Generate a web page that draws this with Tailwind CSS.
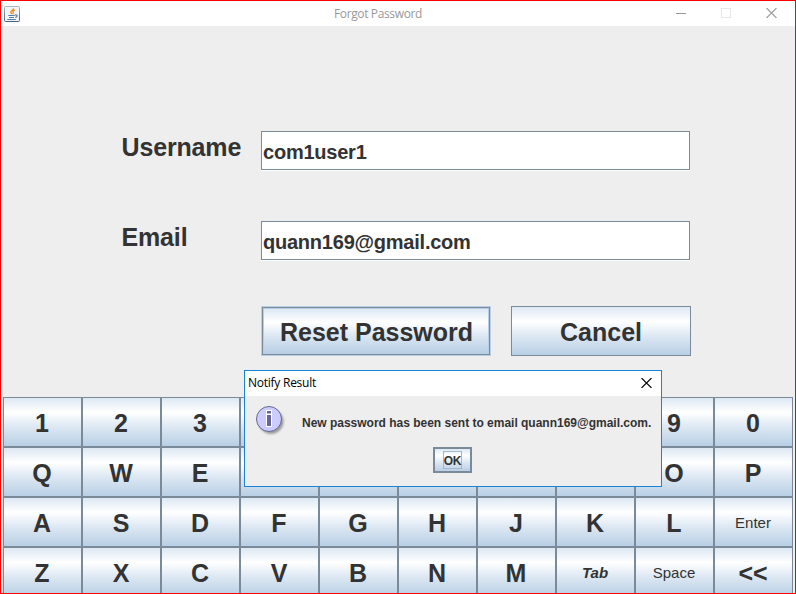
<!DOCTYPE html>
<html lang="en">
<head>
<meta charset="utf-8">
<title>Forgot Password</title>
<script src="https://cdn.jsdelivr.net/npm/@tailwindcss/browser@4"></script>
</head>
<body class="w-[796px] h-[594px] overflow-hidden">
<div class="w-[796px] h-[594px] p-px bg-[#ff0000]">
<div class="relative flex flex-col w-[794px] h-[592px] overflow-hidden bg-[#eeeeee] text-[#333333] font-['Liberation_Sans',Arial,sans-serif]">
  <header class="flex items-center h-[25px] shrink-0 bg-white pl-[3px]">
    <svg class="size-4 shrink-0" viewBox="0 0 16 16">
      <defs><linearGradient id="jb" x1="0" y1="0" x2="0" y2="1"><stop offset="0" stop-color="#a9b7c4"/><stop offset="1" stop-color="#41617c"/></linearGradient></defs>
      <rect x=".5" y=".5" width="15" height="15" rx="1" fill="#f2f4f5" stroke="url(#jb)"/>
      <path d="M9.800 2.500C9.500 4 6.300 4.800 6.700 6.200c.2.8.9 1.200.9 2M10.800 4.200C8.800 5 8.500 5.800 9.100 6.500c.3.5 0 1-.4 1.500" fill="none" stroke="#ee8a22" stroke-width="1.300"/>
      <path d="M4.300 9.500h6.500M5 11.500h5M3.300 13.500h8.500M11 9c3-.8 2.700 2 .3 2.300" fill="none" stroke="#557d9e" stroke-width="1.200"/>
    </svg>
    <h1 class="flex-1 pl-[314px] text-[12px] leading-4 tracking-[-0.37px] whitespace-nowrap text-[#999999] font-['Open_Sans',sans-serif]">Forgot Password</h1>
    <div class="flex items-center gap-[35px] pr-[18px] pb-px text-[#999999]">
      <svg class="w-[10px] h-[11px]" viewBox="0 0 10 11"><path d="M0 5.500h10" stroke="currentColor"/></svg>
      <svg class="w-[10px] h-[10px]" viewBox="0 0 10 10"><rect x=".5" y=".5" width="9" height="9" fill="none" stroke="#e8e8e8"/></svg>
      <svg class="w-[11px] h-[10px]" viewBox="0 0 11 10"><path d="M.5 0l10 10M10.500 0l-10 10" stroke="currentColor" stroke-width="1.100"/></svg>
    </div>
  </header>

  <main class="flex flex-col h-[371px] shrink-0 pt-[105px] pl-[120px]">
    <div class="flex h-[39px] mb-[51px]">
      <label class="w-[140px] pt-[2px] pl-[0.5px] text-[25px] leading-[28px] font-bold tracking-[-0.15px]">Username</label>
      <div class="w-[429px] h-[39px] border border-[#7a8a99] bg-white pl-px pt-[9px] text-[20px] leading-[23px] font-bold tracking-[-0.23px] shadow-[0_1px_0_#ffffff]">com1user1</div>
    </div>
    <div class="flex h-[39px] mb-[46px]">
      <label class="w-[140px] pt-[2px] pl-[0.5px] text-[25px] leading-[28px] font-bold tracking-[-0.15px]">Email</label>
      <div class="w-[429px] h-[39px] border border-[#7a8a99] bg-white pl-px pt-[9px] text-[20px] leading-[23px] font-bold tracking-[-0.23px] shadow-[0_1px_0_#ffffff]">quann169@gmail.com</div>
    </div>
    <div class="flex gap-[20px] pl-[140px]">
      <button class="w-[230px] h-[50px] border border-[#b8cfe5] bg-[#7a8a99] p-px">
        <span class="flex w-full h-full items-center justify-center border border-[#b8cfe5] bg-[linear-gradient(#dde8f3,#ffffff_30%,#dde8f3_60%,#b8cfe5)] text-[25px] leading-[28px] font-bold pt-px pl-px">Reset Password</span>
      </button>
      <button class="flex items-center justify-center w-[180px] h-[50px] border border-[#7a8a99] bg-[linear-gradient(#dde8f3,#ffffff_30%,#dde8f3_60%,#b8cfe5)] text-[25px] leading-[28px] font-bold pt-px">Cancel</button>
    </div>
  </main>

  <section class="grid grid-cols-[repeat(10,79px)] auto-rows-[50px] h-[200px] shrink-0 ml-[2px] text-[25px] leading-[28px] font-bold *:flex *:items-center *:justify-center *:border *:border-[#7a8a99] *:bg-[linear-gradient(#dde8f3,#ffffff_30%,#dde8f3_60%,#b8cfe5)] *:pt-px *:pr-px">
    <button>1</button><button>2</button><button>3</button><button></button><button></button><button></button><button></button><button></button><button>9</button><button>0</button>
    <button>Q</button><button>W</button><button>E</button><button></button><button></button><button></button><button></button><button></button><button>O</button><button>P</button>
    <button>A</button><button>S</button><button>D</button><button>F</button><button>G</button><button>H</button><button>J</button><button>K</button><button>L</button><button><span class="text-[15px] leading-[18px] font-normal">Enter</span></button>
    <button>Z</button><button>X</button><button>C</button><button>V</button><button>B</button><button>N</button><button>M</button><button><span class="text-[15px] leading-[18px] italic">Tab</span></button><button><span class="text-[15px] leading-[18px] font-normal">Space</span></button><button>&lt;&lt;</button>
  </section>

  <div role="dialog" class="absolute left-[243px] top-[369px] flex flex-col w-[418px] h-[117px] border border-[#1883d7] bg-[#eeeeee]">
    <div class="flex items-center justify-between h-[25px] shrink-0 bg-white pl-[3px] pr-[9px] pb-px text-black">
      <h2 class="text-[12px] leading-4 tracking-[-0.25px] whitespace-nowrap font-['Open_Sans',sans-serif]">Notify Result</h2>
      <svg class="w-[11px] h-[10px]" viewBox="0 0 11 10"><path d="M.5 0l10 10M10.500 0l-10 10" stroke="currentColor" stroke-width="1.100"/></svg>
    </div>
    <div class="flex h-[51px] pt-[9px] pl-[10px]">
      <svg class="w-[32px] h-[32px] shrink-0" viewBox="0 0 32 32">
        <defs><filter id="sh" x="-20%" y="-20%" width="150%" height="150%"><feGaussianBlur stdDeviation="1.300"/></filter></defs>
        <circle cx="16" cy="16.500" r="12.500" fill="#000" opacity=".35" filter="url(#sh)"/>
        <circle cx="14" cy="14" r="12.500" fill="#ccccff" stroke="#666699"/>
        <path d="M11 5h6v17h-6z" fill="#fff"/>
        <path d="M12 6h4v2.500h-4zM12 10h4v11h-4z" fill="#666699"/>
      </svg>
      <p class="pl-[15px] pt-[11px] text-[12px] leading-[14px] font-bold tracking-[-0.01px] whitespace-nowrap">New password has been sent to email quann169@gmail.com.</p>
    </div>
    <button class="flex items-center justify-center self-start ml-[188px] w-[39px] h-[26px] border-2 border-[#7a8a99] bg-[linear-gradient(#dde8f3,#ffffff_30%,#dde8f3_60%,#b8cfe5)]">
      <span class="flex items-center justify-center w-[19px] h-[18px] border border-[#a3b8cc] text-[12px] leading-[14px] font-bold tracking-[-0.2px] pt-px">OK</span>
    </button>
  </div>
</div>
</div>
</body>
</html>
